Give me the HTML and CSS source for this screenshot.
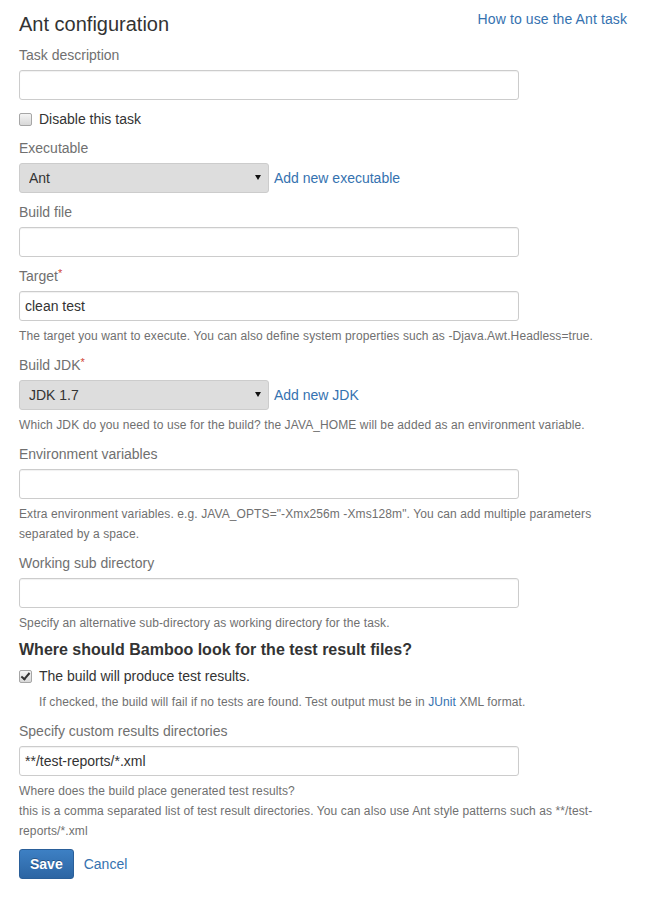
FILE: index.html
```html
<!DOCTYPE html>
<html>
<head>
<meta charset="utf-8">
<title>Ant configuration</title>
<link rel="stylesheet" href="styles.css">
</head>
<body>
<form class="page">
  <div class="header">
    <h2 class="title">Ant configuration</h2>
    <a class="link help-link" href="#">How to use the Ant task</a>
  </div>

  <div class="group">
    <label class="label" for="desc">Task description</label>
    <input class="text" id="desc" type="text">
  </div>

  <div class="group check-row">
    <input class="cb" type="checkbox" id="disable">
    <label class="check-label" for="disable">Disable this task</label>
  </div>

  <div class="group">
    <label class="label" for="exe">Executable</label>
    <div class="select-row">
      <div class="select-wrap">
        <select class="select" id="exe"><option>Ant</option></select>
      </div>
      <a class="link" href="#">Add new executable</a>
    </div>
  </div>

  <div class="group">
    <label class="label" for="bfile">Build file</label>
    <input class="text" id="bfile" type="text">
  </div>

  <div class="group">
    <label class="label" for="target">Target<span class="req">*</span></label>
    <input class="text" id="target" type="text" value="clean test">
    <div class="help">The target you want to execute. You can also define system properties such as -Djava.Awt.Headless=true.</div>
  </div>

  <div class="group">
    <label class="label" for="jdk">Build JDK<span class="req">*</span></label>
    <div class="select-row">
      <div class="select-wrap">
        <select class="select" id="jdk"><option>JDK 1.7</option></select>
      </div>
      <a class="link" href="#">Add new JDK</a>
    </div>
    <div class="help">Which JDK do you need to use for the build? the JAVA_HOME will be added as an environment variable.</div>
  </div>

  <div class="group">
    <label class="label" for="env">Environment variables</label>
    <input class="text" id="env" type="text">
    <div class="help">Extra environment variables. e.g. JAVA_OPTS="-Xmx256m -Xms128m". You can add multiple parameters separated by a space.</div>
  </div>

  <div class="group">
    <label class="label" for="wdir">Working sub directory</label>
    <input class="text" id="wdir" type="text">
    <div class="help">Specify an alternative sub-directory as working directory for the task.</div>
  </div>

  <h3 class="section-title">Where should Bamboo look for the test result files?</h3>

  <div class="check-row">
    <input class="cb" type="checkbox" id="produce" checked>
    <label class="check-label" for="produce">The build will produce test results.</label>
  </div>
  <div class="help indent group">If checked, the build will fail if no tests are found. Test output must be in <a class="link" href="#">JUnit</a> XML format.</div>

  <div class="group last">
    <label class="label" for="dirs">Specify custom results directories</label>
    <input class="text" id="dirs" type="text" value="**/test-reports/*.xml">
    <div class="help">Where does the build place generated test results?<br>this is a comma separated list of test result directories. You can also use Ant style patterns such as **/test-reports/*.xml</div>
  </div>

  <div class="actions">
    <button class="btn" type="button">Save</button>
    <a class="link" href="#">Cancel</a>
  </div>
</form>
</body>
</html>
```

FILE: styles.css
```css
body {
  margin: 0;
  background: #fff;
  color: #333;
  font-family: "Liberation Sans", Arial, sans-serif;
  font-size: 14px;
}

.page {
  padding: 10px 20px 19px 19px;
}

.header {
  display: flex;
  justify-content: space-between;
  align-items: flex-start;
  margin-bottom: 7px;
}

.title {
  margin: 0;
  font-size: 20px;
  font-weight: normal;
  line-height: 28px;
  color: #333;
}

.link {
  color: #3572b0;
  text-decoration: none;
}

.help-link {
  font-size: 14px;
  line-height: 18px;
  letter-spacing: 0.1px;
}

.group {
  margin-bottom: 9px;
}

.group.last {
  margin-bottom: 8px;
}

.label {
  display: block;
  font-size: 14px;
  line-height: 20px;
  color: #707070;
  margin-bottom: 5px;
}

.req {
  color: #d04437;
  font-size: 11px;
  vertical-align: top;
  line-height: 14px;
}

.text {
  display: block;
  box-sizing: border-box;
  width: 500px;
  height: 30px;
  margin: 0;
  padding: 0 5px;
  border: 1px solid #ccc;
  border-radius: 3px;
  box-shadow: inset 0 1px 1px rgba(0, 0, 0, 0.06);
  background: #fff;
  font-family: "Liberation Sans", Arial, sans-serif;
  font-size: 14px;
  color: #333;
}

.select-row {
  display: flex;
  align-items: center;
  gap: 5px;
  font-size: 14px;
}

.select-wrap {
  position: relative;
  width: 250px;
  height: 30px;
}

.select {
  appearance: none;
  -webkit-appearance: none;
  display: block;
  box-sizing: border-box;
  width: 250px;
  height: 30px;
  margin: 0;
  padding: 0 9px;
  border: 1px solid #ccc;
  border-radius: 3px;
  background: #ddd;
  font-family: "Liberation Sans", Arial, sans-serif;
  font-size: 14px;
  color: #333;
}

.select-wrap::after {
  content: "";
  position: absolute;
  right: 8px;
  top: 12px;
  border-left: 3px solid transparent;
  border-right: 3px solid transparent;
  border-top: 5px solid #111;
  pointer-events: none;
}

.check-row {
  display: flex;
  align-items: center;
  height: 20px;
}

.cb {
  appearance: none;
  -webkit-appearance: none;
  position: relative;
  box-sizing: border-box;
  width: 13px;
  height: 13px;
  margin: 0 7px 0 0;
  border: 1px solid #a6a6a6;
  border-radius: 2px;
  background: linear-gradient(#f4f4f4, #d8d8d8);
}

.cb:checked::after {
  content: "";
  position: absolute;
  left: 3px;
  top: 0px;
  width: 3px;
  height: 7px;
  border-right: 2px solid #333;
  border-bottom: 2px solid #333;
  transform: rotate(40deg);
}

.check-label {
  font-size: 14px;
  line-height: 20px;
  color: #333;
}

.help {
  margin-top: 5px;
  font-size: 12px;
  line-height: 20px;
  letter-spacing: 0.1px;
  color: #707070;
}

.help.indent {
  padding-left: 20px;
  margin-top: 6px;
}

.section-title {
  margin: 0 0 8px;
  font-size: 16px;
  font-weight: bold;
  line-height: 16px;
  color: #333;
}

.actions {
  display: flex;
  align-items: center;
  gap: 10px;
}

.btn {
  box-sizing: border-box;
  height: 30px;
  padding: 0 10px;
  border: 1px solid #2a5f99;
  border-radius: 3px;
  background: linear-gradient(#3d80c4, #2c65a3);
  color: #fff;
  font-family: "Liberation Sans", Arial, sans-serif;
  font-size: 14px;
  font-weight: bold;
  text-shadow: 0 -1px 0 rgba(0, 0, 0, 0.3);
}

.actions .link {
  font-size: 14px;
}
```
